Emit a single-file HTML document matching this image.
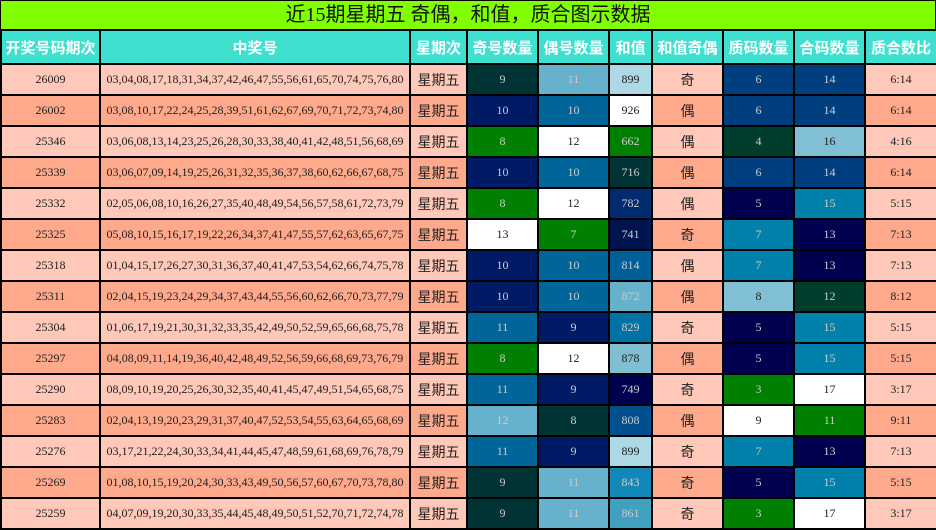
<!DOCTYPE html>
<html><head><meta charset="utf-8"><style>
body{margin:0;width:936px;height:530px;overflow:hidden;background:#000;font-family:"Liberation Serif","Noto Serif CJK SC",serif;}
.title{position:absolute;left:0;top:0;width:934px;height:28px;background:#7fff00;border:1px solid #000;text-align:center;font:20px/28px "Liberation Serif","Noto Sans CJK SC",sans-serif;color:#111;}
table{position:absolute;left:0;top:29px;border-collapse:collapse;table-layout:fixed;width:936px;}
td,th{border:2px solid #000;text-align:center;padding:0;font-size:12px;color:#222;overflow:hidden;white-space:nowrap;}
th{background:#40e0d0;color:#fff;font:bold 15px "Noto Sans CJK SC",sans-serif;height:32px;}
td{height:29px;}
tr.a td{background:#ffc8b8}tr.b td{background:#ffa98c}
td.c{font-family:"Noto Sans CJK SC",sans-serif;font-size:14px}
td.d{color:#ccc}
</style></head><body>
<div class="title">近15期星期五 奇偶，和值，质合图示数据</div>
<table>
<colgroup><col style="width:99px"><col style="width:310px"><col style="width:57px"><col style="width:71px"><col style="width:71px"><col style="width:43px"><col style="width:71px"><col style="width:71px"><col style="width:71px"><col style="width:72px"></colgroup>
<tr><th>开奖号码期次</th><th>中奖号</th><th>星期次</th><th>奇号数量</th><th>偶号数量</th><th>和值</th><th>和值奇偶</th><th>质码数量</th><th>合码数量</th><th>质合数比</th></tr>
<tr class="a"><td>26009</td><td>03,04,08,17,18,31,34,37,42,46,47,55,56,61,65,70,74,75,76,80</td><td class="c">星期五</td><td class="d" style="background:#003333">9</td><td class="d" style="background:#66b2cc">11</td><td style="background:#add8e6">899</td><td class="c">奇</td><td class="d" style="background:#003f7f">6</td><td class="d" style="background:#003f7f">14</td><td>6:14</td></tr>
<tr class="b"><td>26002</td><td>03,08,10,17,22,24,25,28,39,51,61,62,67,69,70,71,72,73,74,80</td><td class="c">星期五</td><td class="d" style="background:#001a66">10</td><td class="d" style="background:#006699">10</td><td style="background:#fff">926</td><td class="c">偶</td><td class="d" style="background:#003f7f">6</td><td class="d" style="background:#003f7f">14</td><td>6:14</td></tr>
<tr class="a"><td>25346</td><td>03,06,08,13,14,23,25,26,28,30,33,38,40,41,42,48,51,56,68,69</td><td class="c">星期五</td><td class="d" style="background:#008000">8</td><td style="background:#fff">12</td><td class="d" style="background:#008000">662</td><td class="c">偶</td><td class="d" style="background:#003d2d">4</td><td style="background:#80bfd4">16</td><td>4:16</td></tr>
<tr class="b"><td>25339</td><td>03,06,07,09,14,19,25,26,31,32,35,36,37,38,60,62,66,67,68,75</td><td class="c">星期五</td><td class="d" style="background:#001a66">10</td><td class="d" style="background:#006699">10</td><td class="d" style="background:#003333">716</td><td class="c">偶</td><td class="d" style="background:#003f7f">6</td><td class="d" style="background:#003f7f">14</td><td>6:14</td></tr>
<tr class="a"><td>25332</td><td>02,05,06,08,10,16,26,27,35,40,48,49,54,56,57,58,61,72,73,79</td><td class="c">星期五</td><td class="d" style="background:#008000">8</td><td style="background:#fff">12</td><td class="d" style="background:#002b6f">782</td><td class="c">偶</td><td class="d" style="background:#000050">5</td><td class="d" style="background:#0080aa">15</td><td>5:15</td></tr>
<tr class="b"><td>25325</td><td>05,08,10,15,16,17,19,22,26,34,37,41,47,55,57,62,63,65,67,75</td><td class="c">星期五</td><td style="background:#fff">13</td><td class="d" style="background:#008000">7</td><td class="d" style="background:#001450">741</td><td class="c">奇</td><td class="d" style="background:#0080aa">7</td><td class="d" style="background:#000050">13</td><td>7:13</td></tr>
<tr class="a"><td>25318</td><td>01,04,15,17,26,27,30,31,36,37,40,41,47,53,54,62,66,74,75,78</td><td class="c">星期五</td><td class="d" style="background:#001a66">10</td><td class="d" style="background:#006699">10</td><td class="d" style="background:#005f99">814</td><td class="c">偶</td><td class="d" style="background:#0080aa">7</td><td class="d" style="background:#000050">13</td><td>7:13</td></tr>
<tr class="b"><td>25311</td><td>02,04,15,19,23,24,29,34,37,43,44,55,56,60,62,66,70,73,77,79</td><td class="c">星期五</td><td class="d" style="background:#001a66">10</td><td class="d" style="background:#006699">10</td><td class="d" style="background:#66b2cc">872</td><td class="c">偶</td><td style="background:#80bfd4">8</td><td class="d" style="background:#003d2d">12</td><td>8:12</td></tr>
<tr class="a"><td>25304</td><td>01,06,17,19,21,30,31,32,33,35,42,49,50,52,59,65,66,68,75,78</td><td class="c">星期五</td><td class="d" style="background:#006699">11</td><td class="d" style="background:#001a66">9</td><td class="d" style="background:#0072a6">829</td><td class="c">奇</td><td class="d" style="background:#000050">5</td><td class="d" style="background:#0080aa">15</td><td>5:15</td></tr>
<tr class="b"><td>25297</td><td>04,08,09,11,14,19,36,40,42,48,49,52,56,59,66,68,69,73,76,79</td><td class="c">星期五</td><td class="d" style="background:#008000">8</td><td style="background:#fff">12</td><td style="background:#7fbfd4">878</td><td class="c">偶</td><td class="d" style="background:#000050">5</td><td class="d" style="background:#0080aa">15</td><td>5:15</td></tr>
<tr class="a"><td>25290</td><td>08,09,10,19,20,25,26,30,32,35,40,41,45,47,49,51,54,65,68,75</td><td class="c">星期五</td><td class="d" style="background:#006699">11</td><td class="d" style="background:#001a66">9</td><td class="d" style="background:#000050">749</td><td class="c">奇</td><td class="d" style="background:#008000">3</td><td style="background:#fff">17</td><td>3:17</td></tr>
<tr class="b"><td>25283</td><td>02,04,13,19,20,23,29,31,37,40,47,52,53,54,55,63,64,65,68,69</td><td class="c">星期五</td><td class="d" style="background:#66b2cc">12</td><td class="d" style="background:#003333">8</td><td class="d" style="background:#005090">808</td><td class="c">偶</td><td style="background:#fff">9</td><td class="d" style="background:#008000">11</td><td>9:11</td></tr>
<tr class="a"><td>25276</td><td>03,17,21,22,24,30,33,34,41,44,45,47,48,59,61,68,69,76,78,79</td><td class="c">星期五</td><td class="d" style="background:#006699">11</td><td class="d" style="background:#001a66">9</td><td style="background:#add8e6">899</td><td class="c">奇</td><td class="d" style="background:#0080aa">7</td><td class="d" style="background:#000050">13</td><td>7:13</td></tr>
<tr class="b"><td>25269</td><td>01,08,10,15,19,20,24,30,33,43,49,50,56,57,60,67,70,73,78,80</td><td class="c">星期五</td><td class="d" style="background:#003333">9</td><td class="d" style="background:#66b2cc">11</td><td class="d" style="background:#1288b8">843</td><td class="c">奇</td><td class="d" style="background:#000050">5</td><td class="d" style="background:#0080aa">15</td><td>5:15</td></tr>
<tr class="a"><td>25259</td><td>04,07,09,19,20,30,33,35,44,45,48,49,50,51,52,70,71,72,74,78</td><td class="c">星期五</td><td class="d" style="background:#003333">9</td><td class="d" style="background:#66b2cc">11</td><td class="d" style="background:#3fa0c0">861</td><td class="c">奇</td><td class="d" style="background:#008000">3</td><td style="background:#fff">17</td><td>3:17</td></tr>
</table>
</body></html>
